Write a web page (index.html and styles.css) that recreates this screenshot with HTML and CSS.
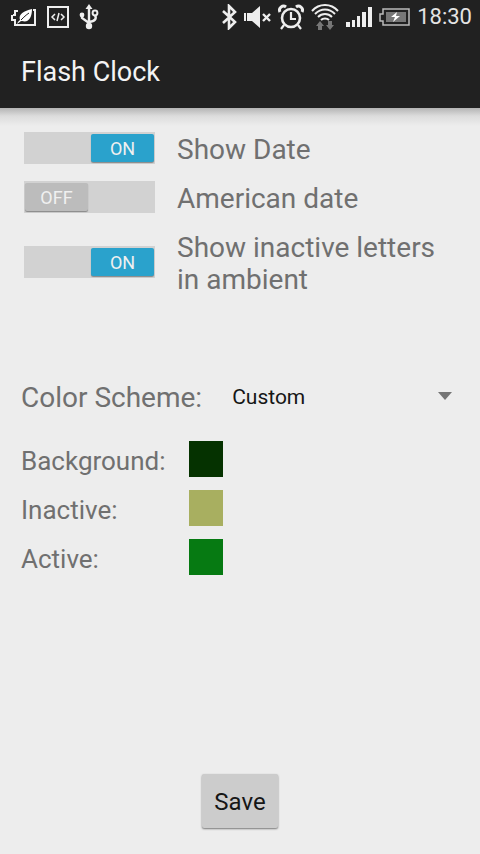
FILE: index.html
```html
<!DOCTYPE html>
<html lang="en">
<head>
<meta charset="utf-8">
<meta name="viewport" content="width=device-width, initial-scale=1">
<title>Flash Clock</title>
<link rel="stylesheet" href="styles.css">
</head>
<body>
<header class="top">
  <div class="status">
    <div class="status-left">
      <svg width="26" height="20" viewBox="0 0 26 20" aria-hidden="true">
        <path d="M7 4H4v4H1v5h3v5h20V3h-2" fill="none" stroke="#eee" stroke-width="2" stroke-dasharray="9 1 60"/>
        <path d="M6 17c1-3 3-4 3-4-2-6 4-9 12-11 0 8-3 14-10 12-2 0-3 2-5 3z" fill="#fff"/>
        <path d="M10 13c3-3 5-5 8-7" stroke="#222" fill="none"/>
      </svg>
      <svg width="22" height="22" viewBox="0 0 22 22" aria-hidden="true">
        <path d="M1 1h20v20H1z" fill="none" stroke="#eee" stroke-width="2"/>
        <path d="M8 8l-3 3 3 3M14 8l3 3-3 3M12 7l-2 8" fill="none" stroke="#eee" stroke-width="1.5"/>
      </svg>
      <svg width="20" height="26" viewBox="0 0 20 26" aria-hidden="true">
        <path d="M10 3v19M3 12v2l7 5M16 11c2 4 0 6-6 7" fill="none" stroke="#eee" stroke-width="2.4"/>
        <path d="M10 0l3.5 5h-7z" fill="#eee"/>
        <circle cx="3" cy="11" r="2.4" fill="#eee"/>
        <circle cx="16" cy="9" r="2.4" fill="none" stroke="#eee" stroke-width="2"/>
        <circle cx="10" cy="22" r="3.2" fill="#eee"/>
      </svg>
    </div>
    <div class="status-right">
      <svg width="16" height="26" viewBox="0 0 16 26" aria-hidden="true">
        <path d="M2 7l12 11-6 6V2l6 6L2 19" fill="none" stroke="#eee" stroke-width="2.6"/>
      </svg>
      <svg width="27" height="24" viewBox="0 0 27 24" aria-hidden="true">
        <path d="M0 8h2v8H0zM3 8h5l8-7v22l-8-7H3z" fill="#eee"/>
        <path d="M19 9l7 7M26 9l-7 7" stroke="#eee" stroke-width="2.4"/>
      </svg>
      <svg width="26" height="26" viewBox="0 0 26 26" aria-hidden="true">
        <circle cx="13" cy="14" r="9" fill="none" stroke="#eee" stroke-width="2.6"/>
        <path d="M13 8v7h5M6 21l-3 4M20 21l3 4" fill="none" stroke="#eee" stroke-width="2.2"/>
        <path d="M2 8a4 4 0 0 1 6-5M24 8a4 4 0 0 0-6-5" fill="none" stroke="#eee" stroke-width="3"/>
      </svg>
      <svg width="28" height="28" viewBox="0 0 28 28" aria-hidden="true">
        <path d="M1 8c7-8 19-8 26 0M4 11c6-6 14-6 20 0M7 14c4-4 10-4 14 0M10 17c2-2 6-2 8 0" fill="none" stroke="#eee" stroke-width="2"/>
        <path d="M9 18l4 5h-2v4H7v-4H5zM19 27l4-5h-2v-4h-4v4h-2z" fill="#777"/>
      </svg>
      <svg width="26" height="20" viewBox="0 0 26 20" aria-hidden="true">
        <path d="M0 15h4v5H0zM6 13h3v7H6zM11 9h3v11h-3zM16 5h4v15h-4zM22 0h4v20h-4z" fill="#eee"/>
      </svg>
      <svg width="31" height="18" viewBox="0 0 31 18" aria-hidden="true">
        <path d="M4 1h26v16H4v-4H1V6h3z" fill="none" stroke="#bbb" stroke-width="1.5"/>
        <path d="M7 4h20v10H7z" fill="#777"/>
        <path d="M18 4l-6 5h4l-2 5 7-6h-4z" fill="#fff"/>
      </svg>
      <time class="clock">18:30</time>
    </div>
  </div>
  <h1 class="title">Flash Clock</h1>
</header>
<main class="settings">
  <div class="toggles">
    <label class="toggle"><span class="switch"><input type="checkbox" checked><span class="thumb">ON</span></span><span>Show Date</span></label>
    <label class="toggle"><span class="switch"><input type="checkbox"><span class="thumb">OFF</span></span><span>American date</span></label>
    <label class="toggle"><span class="switch"><input type="checkbox" checked><span class="thumb">ON</span></span><span>Show inactive letters in ambient</span></label>
  </div>
  <div class="scheme">
    <label for="scheme">Color Scheme:</label>
    <div class="spinner">
      <select id="scheme"><option>Custom</option></select>
      <svg width="14" height="8" viewBox="0 0 14 8" aria-hidden="true"><path d="M0 0h14L7 8z" fill="#757575"/></svg>
    </div>
  </div>
  <div class="colors">
    <label for="background">Background:</label><button type="button" id="background" class="swatch background"></button>
    <label for="inactive">Inactive:</label><button type="button" id="inactive" class="swatch inactive"></button>
    <label for="active">Active:</label><button type="button" id="active" class="swatch active"></button>
  </div>
  <button type="button" class="save">Save</button>
</main>
</body>
</html>
```
FILE: styles.css
```css
* { box-sizing: border-box; }

body {
  display: flex;
  flex-direction: column;
  min-height: 100vh;
  margin: 0;
  background: #ededed;
  color: #707070;
  font: 28px/32px Roboto, sans-serif;
}

button, select { font-family: inherit; }
svg { display: block; flex: none; }

.top { background: #212121; color: #f4f4f4; }

.status {
  display: flex;
  justify-content: space-between;
  height: 36px;
  padding: 0 8px 2px 11px;
}

.status-left, .status-right { display: flex; align-items: center; }
.status-left { gap: 10px; }
.status-right { gap: 7px; }
.clock { font-size: 22px; color: #e4e4e4; }

.title {
  margin: 0;
  padding: 20px 21px;
  font-size: 27px;
  font-weight: 400;
  line-height: 32px;
}

.settings {
  display: flex;
  flex: 1;
  flex-direction: column;
  padding: 26px 21px 26px;
  background: linear-gradient(#b4b4b4, #dcdcdc 8px, #ededed 18px);
}

.toggles { display: grid; gap: 17px; padding: 0 3px; }

.toggle { display: grid; grid-template-columns: 131px 1fr; gap: 22px; align-items: center; }

.switch { display: grid; height: 32px; margin: -2px 0 2px; }

.switch input {
  grid-area: 1 / 1;
  appearance: none;
  margin: 0;
  background: #d2d2d2;
}

.thumb {
  grid-area: 1 / 1;
  z-index: 1;
  width: 63px;
  height: 28px;
  margin: 2px 1px;
  border-radius: 2px;
  background: #bcbcbc;
  box-shadow: 0 1px 1px #888;
  color: #f0f0f0;
  font-size: 18px;
  line-height: 30px;
  text-align: center;
}

.switch input:checked + .thumb { justify-self: end; background: #2aa2cc; }

.scheme { display: flex; gap: 30px; margin-top: 86px; }

.spinner { display: grid; flex: 1; align-items: center; padding-right: 7px; }
.spinner select, .spinner svg { grid-area: 1 / 1; }
.spinner svg { justify-self: end; margin-bottom: 4px; pointer-events: none; }

select {
  appearance: none;
  width: 100%;
  padding: 0 0 3px;
  border: 0;
  background: none;
  color: #161616;
  font-size: 21px;
}

.colors {
  display: grid;
  grid-template-columns: 148px 34px;
  gap: 13px 20px;
  align-items: center;
  margin-top: 27px;
  font-size: 26px;
}

.colors label { padding-top: 3px; }

.swatch { height: 36px; padding: 0; border: 0; }
.background { background: #053200; }
.inactive { background: #a8af60; }
.active { background: #067a12; }

.save {
  align-self: center;
  width: 76px;
  height: 54px;
  margin-top: auto;
  padding: 2px 0 0;
  border: 0;
  border-radius: 2px;
  background: #cccccc;
  box-shadow: 0 1px 2px #777;
  color: #161616;
  font-size: 24px;
}
```
